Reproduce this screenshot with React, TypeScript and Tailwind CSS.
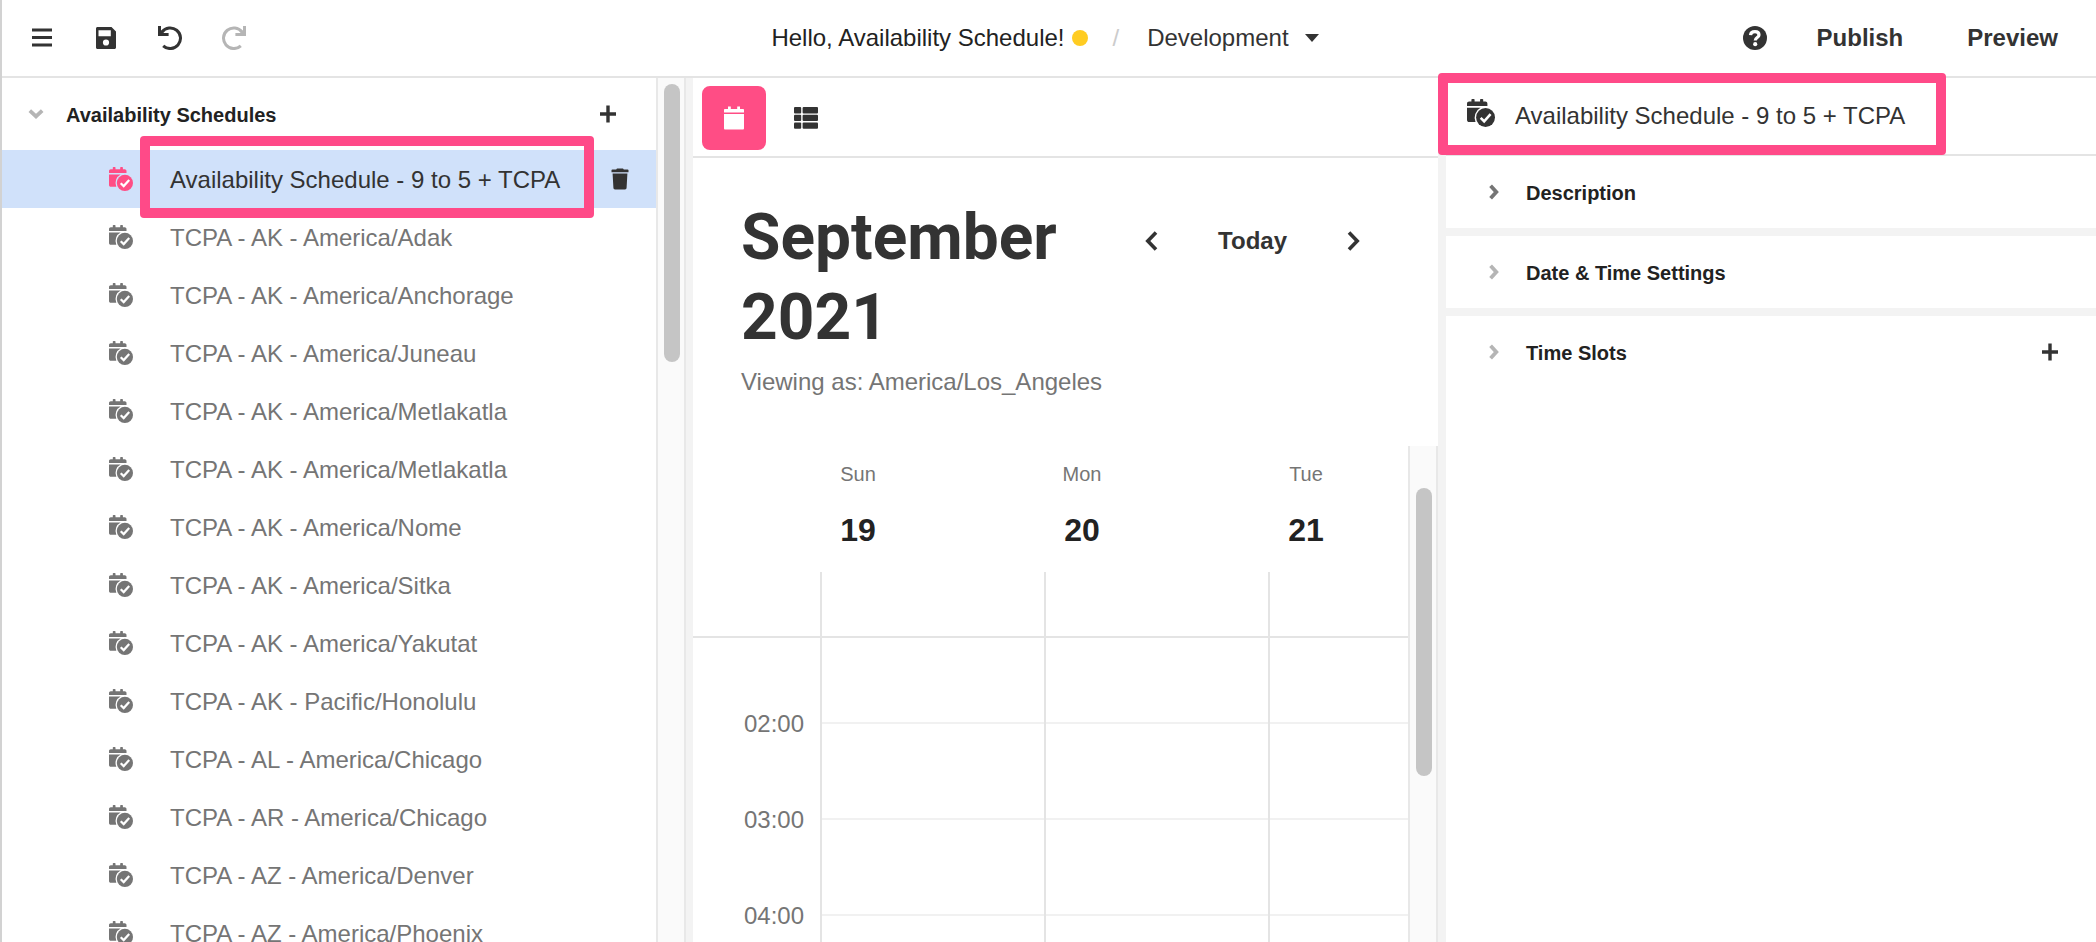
import React from "react";

const schedules = [
  "TCPA - AK - America/Adak",
  "TCPA - AK - America/Anchorage",
  "TCPA - AK - America/Juneau",
  "TCPA - AK - America/Metlakatla",
  "TCPA - AK - America/Metlakatla",
  "TCPA - AK - America/Nome",
  "TCPA - AK - America/Sitka",
  "TCPA - AK - America/Yakutat",
  "TCPA - AK - Pacific/Honolulu",
  "TCPA - AL - America/Chicago",
  "TCPA - AR - America/Chicago",
  "TCPA - AZ - America/Denver",
  "TCPA - AZ - America/Phoenix",
];

const days = [
  { name: "Sun", date: 19 },
  { name: "Mon", date: 20 },
  { name: "Tue", date: 21 },
];

const hours = ["02:00", "03:00", "04:00"];

function ScheduleIcon({ className }: { className: string }) {
  return (
    <svg viewBox="0 0 24 24" className={className} fill="currentColor" aria-hidden="true">
      <path d="M0 6V4C0 2.900.8 2.200 1.800 2.200H3.800V.5C3.800.2 4.100 0 4.500 0H5.800C6.200 0 6.500.2 6.500.5V2.200H11.200V.5C11.200.2 11.500 0 11.900 0H13.200C13.600 0 13.900.2 13.900.5V2.200H15.700C16.700 2.200 17.500 2.900 17.500 4V6Z" />
      <path d="M0 7.600H11.600A9.400 9.400 0 0 0 7.300 19.700H1.800C.8 19.700 0 18.900 0 17.900Z" />
      <circle cx="15.900" cy="15.900" r="8.100" />
      <path d="M11.700 16.200L14.700 19.100L20.200 13" fill="none" stroke="white" strokeWidth="2.200" />
    </svg>
  );
}

function Chevron({ className }: { className: string }) {
  return (
    <svg viewBox="0 0 13 20" className={className} fill="none" stroke="currentColor" strokeWidth="3.600" aria-hidden="true">
      <path d="M2 1.500L10.200 10L2 18.500" />
    </svg>
  );
}

function SmallChevron({ className }: { className: string }) {
  return (
    <svg viewBox="0 0 10 16" className={className} fill="none" stroke="currentColor" strokeWidth="3.800" aria-hidden="true">
      <path d="M1.600 1.800L7.300 8L1.600 14.200" />
    </svg>
  );
}

function Plus() {
  return (
    <svg viewBox="0 0 16 18" className="h-[18px] w-4" fill="none" stroke="currentColor" strokeWidth="3.400" aria-hidden="true">
      <path d="M8 .5V17.500M0 9H16" />
    </svg>
  );
}

function Undo({ className }: { className: string }) {
  return (
    <svg viewBox="0 0 24 24" className={className} fill="none" stroke="currentColor" strokeWidth="3" aria-hidden="true">
      <path d="M4 6A10.300 10.300 0 1 1 5.200 19.800" />
      <path d="M1.500 0V8.600H10.600" />
      <path d="M2 3L7.500 9H2Z" fill="currentColor" stroke="none" />
    </svg>
  );
}

function TopBar() {
  return (
    <header className="flex h-[78px] shrink-0 items-center justify-between border-b-2 border-[#e4e4e4] pl-[30px] pr-[38px]">
      <div className="flex w-[380px] items-center gap-10">
        <button type="button" aria-label="Menu" className="w-6">
          <svg viewBox="0 0 24 24" className="size-6" fill="currentColor" aria-hidden="true">
            <path d="M0 2.500H20V5.500H0ZM0 10H20V13H0ZM0 17.500H20V20.500H0Z" />
          </svg>
        </button>
        <button type="button" aria-label="Save" className="w-[22px]">
          <svg viewBox="0 0 22 24" className="h-6 w-[22px]" fill="currentColor" fillRule="evenodd" aria-hidden="true">
            <path d="M1.500 1H15.500L20 5.500V21.500C20 22.300 19.300 23 18.500 23H1.500C.7 23 0 22.300 0 21.500V2.500C0 1.700.7 1 1.500 1ZM2.500 4.300V10.300H14.800V4.300ZM10 13.400A3.100 3.100 0 1 0 10 19.600A3.100 3.100 0 1 0 10 13.400Z" />
          </svg>
        </button>
        <button type="button" aria-label="Undo" className="w-6">
          <Undo className="size-6" />
        </button>
        <button type="button" aria-label="Redo" className="w-6 text-[#b5b5b5]">
          <Undo className="size-6 -scale-x-100" />
        </button>
      </div>
      <div className="flex items-center whitespace-nowrap">
        <span className="text-[#222]">Hello, Availability Schedule!</span>
        <span className="ml-2 size-4 rounded-full bg-[#ffcc22]" />
        <span className="ml-6 mr-7 text-[#ccc]">/</span>
        <button type="button" className="flex items-center gap-4">
          Development
          <svg viewBox="0 0 14 8" className="h-2 w-3.5" fill="currentColor" aria-hidden="true">
            <path d="M0 0H14L7 8Z" />
          </svg>
        </button>
      </div>
      <div className="flex w-[380px] items-center justify-end font-bold">
        <button type="button" aria-label="Help">
          <svg viewBox="0 0 24 24" className="size-6" aria-hidden="true">
            <circle cx="12" cy="12" r="12" fill="currentColor" />
            <path d="M7.500 9.200C7.700 6.800 9.600 5.600 12 5.600C14.400 5.600 16 6.900 16 8.900C16 11.700 12.200 11.400 12.200 14.600" fill="none" stroke="white" strokeWidth="3.200" />
            <circle cx="12.200" cy="18.200" r="2.100" fill="white" />
          </svg>
        </button>
        <button type="button" className="ml-[50px] font-bold">Publish</button>
        <button type="button" className="ml-16 font-bold">Preview</button>
      </div>
    </header>
  );
}

function Sidebar() {
  return (
    <aside className="flex w-[691px] shrink-0 overflow-hidden border-r-[7px] border-[#f3f3f3]">
      <div className="flex-1">
        <div className="flex h-[72px] items-center pl-6 pr-10">
          <button type="button" aria-label="Collapse" className="flex w-5 justify-center text-[#b5b5b5]">
            <SmallChevron className="h-4 w-2.5 rotate-90" />
          </button>
          <h2 className="ml-5 flex-1 pt-0.5 text-xl font-bold text-[#222]">Availability Schedules</h2>
          <button type="button" aria-label="Add schedule">
            <Plus />
          </button>
        </div>
        <ul>
          <li className="relative flex h-[58px] items-center bg-[#d0e1fa] pl-[107px] pr-[27px]">
            <ScheduleIcon className="size-6 text-[#ff4d85]" />
            <a href="#selected" className="ml-[37px] flex-1 pt-0.5">Availability Schedule - 9 to 5 + TCPA</a>
            <button type="button" aria-label="Delete">
              <svg viewBox="0 0 18 22" className="h-[22px] w-[18px]" fill="currentColor" aria-hidden="true">
                <path d="M.5 2.200C.5 1.800.8 1.500 1.400 1.500H5.200L6 .5H12L12.800 1.500H16.600C17.200 1.500 17.500 1.800 17.500 2.200V4.200H.5ZM1.600 5.500H16.400L15.600 19.800C15.500 20.800 14.900 21.500 14 21.500H4C3.100 21.500 2.500 20.800 2.400 19.800Z" />
              </svg>
            </button>
            <span className="pointer-events-none absolute -bottom-2.5 -top-3.5 left-[138px] w-[454px] rounded border-10 border-[#ff4a88]" />
          </li>
          {schedules.map((name, i) => (
            <li key={i} className="flex h-[58px] items-center pl-[107px] text-[#757575]">
              <ScheduleIcon className="size-6" />
              <a href={`#schedule-${i}`} className="ml-[37px] pt-0.5">{name}</a>
            </li>
          ))}
        </ul>
      </div>
      <div className="w-[30px] border-x-2 border-[#e8e8e8] bg-[#fafafa] px-1.5 pt-1.5">
        <div className="h-[278px] w-4 rounded-full bg-[#c5c5c5]" />
      </div>
    </aside>
  );
}

function Calendar() {
  return (
    <main className="flex min-w-0 flex-1 flex-col overflow-hidden">
      <div className="flex h-20 shrink-0 items-center border-b-2 border-[#e4e4e4] pl-[9px] pt-0.5">
        <button type="button" aria-label="Calendar view" className="flex size-16 items-center justify-center rounded-lg bg-[#ff4d85] text-white">
          <svg viewBox="0 0 20 24" className="h-6 w-5" fill="currentColor" aria-hidden="true">
            <path d="M0 6.500V4C0 3.400.5 3 1 3H4V.5H6.800V3H13.200V.5H16V3H19C19.500 3 20 3.400 20 4V6.500ZM0 8H20V22.500C20 23 19.500 23.500 19 23.500H1C.5 23.500 0 23 0 22.500Z" />
          </svg>
        </button>
        <button type="button" aria-label="List view" className="ml-7">
          <svg viewBox="0 0 24 22" className="h-[22px] w-6" fill="currentColor" aria-hidden="true">
            {[0, 7.7, 15.4].map((y) => (
              <g key={y}>
                <rect x="0" y={y} width="7.200" height="6.400" rx="1" />
                <rect x="8.600" y={y} width="15.400" height="6.400" rx="1" />
              </g>
            ))}
          </svg>
        </button>
      </div>
      <div className="flex h-72 shrink-0 items-start justify-between pl-12 pr-[78px] pt-10">
        <div className="w-[340px]">
          <h1 className="font-[Roboto,'Liberation_Sans',sans-serif] text-[64px] font-bold leading-[80px]">September 2021</h1>
          <p className="mt-2 whitespace-nowrap text-[#757575]">Viewing as: America/Los_Angeles</p>
        </div>
        <div className="flex h-[86px] items-center">
          <button type="button" aria-label="Previous">
            <Chevron className="h-5 w-[13px] rotate-180" />
          </button>
          <button type="button" className="mx-[60px] font-bold">Today</button>
          <button type="button" aria-label="Next">
            <Chevron className="h-5 w-[13px]" />
          </button>
        </div>
      </div>
      <div className="flex min-h-0 flex-1">
        <div className="min-w-0 flex-1 overflow-hidden">
          <div className="flex h-[126px] pl-[129px]">
            {days.map((d) => (
              <div key={d.name} className="w-56 shrink-0">
                <div className="w-[72px] pt-3.5 text-center">
                  <div className="text-xl leading-7 text-[#757575]">{d.name}</div>
                  <div className="mt-[22px] text-[32px] font-bold leading-10 text-[#222]">{d.date}</div>
                </div>
              </div>
            ))}
          </div>
          <div className="flex h-[66px] border-b-2 border-[#e4e4e4] pl-[127px]">
            {days.map((d) => (
              <div key={d.name} className="w-56 shrink-0 border-l-2 border-[#e4e4e4]" />
            ))}
          </div>
          <div className="flex">
            <div className="w-[127px] shrink-0 pl-[51px] pt-[70px] text-[#757575]">
              {hours.map((h) => (
                <div key={h} className="h-24 leading-8">{h}</div>
              ))}
            </div>
            {days.map((d) => (
              <div key={d.name} className="w-56 shrink-0 border-l-2 border-[#e4e4e4]">
                <div className="h-[86px] border-b-2 border-[#f1f1f1]" />
                <div className="h-24 border-b-2 border-[#f1f1f1]" />
                <div className="h-24 border-b-2 border-[#f1f1f1]" />
                <div className="h-24" />
              </div>
            ))}
          </div>
        </div>
        <div className="w-[30px] shrink-0 border-x-2 border-[#e8e8e8] bg-[#fafafa] px-1.5 pt-[42px]">
          <div className="h-72 w-4 rounded-full bg-[#c5c5c5]" />
        </div>
      </div>
    </main>
  );
}

function Section({ title, tone, addable }: { title: string; tone: string; addable?: boolean }) {
  return (
    <section className="flex h-[72px] items-center pl-[43px] pr-[38px]">
      <button type="button" className="flex flex-1 items-center gap-[27px] text-left text-xl font-bold text-[#222]">
        <span className={tone}>
          <SmallChevron className="h-4 w-2.5" />
        </span>
        <span className="pt-0.5">{title}</span>
      </button>
      {addable && (
        <button type="button" aria-label={`Add ${title}`}>
          <Plus />
        </button>
      )}
    </section>
  );
}

function Properties() {
  return (
    <aside className="w-[658px] shrink-0 border-l-8 border-[#f3f3f3]">
      <div className="relative flex h-[78px] items-center border-b-2 border-[#e4e4e4] pl-[21px]">
        <ScheduleIcon className="mb-1.5 size-7" />
        <span className="ml-5">Availability Schedule - 9 to 5 + TCPA</span>
        <span className="pointer-events-none absolute -bottom-px -left-2 -top-[5px] w-[508px] rounded border-10 border-[#ff4a88]" />
      </div>
      <Section title="Description" tone="text-[#757575]" />
      <div className="h-2 bg-[#f3f3f3]" />
      <Section title="Date &amp; Time Settings" tone="text-[#b5b5b5]" />
      <div className="h-2 bg-[#f3f3f3]" />
      <Section title="Time Slots" tone="text-[#b5b5b5]" addable />
    </aside>
  );
}

export default function App() {
  return (
    <div className="flex h-screen flex-col overflow-hidden border-l-2 border-[#d2d2d2] bg-white font-['Liberation_Sans',Arial,sans-serif] text-2xl text-[#333]">
      <TopBar />
      <div className="flex min-h-0 flex-1">
        <Sidebar />
        <Calendar />
        <Properties />
      </div>
    </div>
  );
}
